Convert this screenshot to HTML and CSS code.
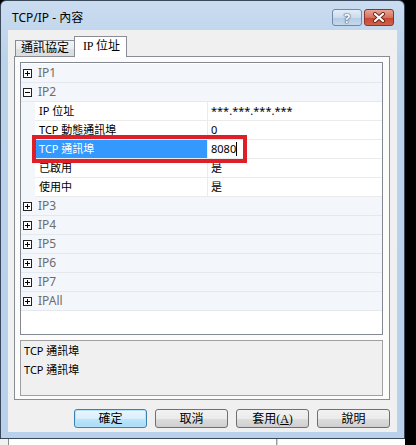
FILE: index.html
```html
<!DOCTYPE html>
<html lang="zh-Hant">
<head>
    <meta charset="UTF-8">
    <title>TCP/IP - 內容</title>
    <link rel="stylesheet" href="styles.css">
</head>
<body>
    <div class="screen">
        <div class="window">
            <div class="titlebar">
                <span class="title">TCP/IP - 內容</span>
                <div class="caption-buttons">
                    <span class="cap-btn help">?</span>
                    <span class="cap-btn close">
                        <svg width="14" height="11" viewBox="0 0 14 11">
                            <path d="M3 2 L11 9 M11 2 L3 9" stroke="#6b2218" stroke-width="4" stroke-linecap="round"/>
                            <path d="M3 2 L11 9 M11 2 L3 9" stroke="#fff" stroke-width="2.2" stroke-linecap="round"/>
                        </svg>
                    </span>
                </div>
            </div>

            <div class="client">
                <div class="tabs">
                    <div class="tab">通訊協定</div>
                    <div class="tab active">IP 位址</div>
                </div>

                <div class="tab-panel">
                    <div class="grid">
                        <div class="row cat"><svg class="toggle" width="9" height="9" viewBox="0 0 9 9"><rect x="0.5" y="0.5" width="8" height="8" fill="#fff" stroke="#222"/><path d="M2 4.5h5M4.5 2v5" stroke="#000"/></svg><span class="cat-name">IP1</span></div>
                        <div class="row cat"><svg class="toggle" width="9" height="9" viewBox="0 0 9 9"><rect x="0.5" y="0.5" width="8" height="8" fill="#fff" stroke="#222"/><path d="M2 4.5h5" stroke="#000"/></svg><span class="cat-name">IP2</span></div>
                        <div class="row prop"><span class="gutter"></span><span class="name">IP 位址</span><span class="value">***.***.***.***</span></div>
                        <div class="row prop"><span class="gutter"></span><span class="name">TCP 動態通訊埠</span><span class="value">0</span></div>
                        <div class="row prop selected"><span class="gutter"></span><span class="name">TCP 通訊埠</span><span class="value">8080<span class="caret"></span></span></div>
                        <div class="row prop"><span class="gutter"></span><span class="name">已啟用</span><span class="value">是</span></div>
                        <div class="row prop"><span class="gutter"></span><span class="name">使用中</span><span class="value">是</span></div>
                        <div class="row cat"><svg class="toggle" width="9" height="9" viewBox="0 0 9 9"><rect x="0.5" y="0.5" width="8" height="8" fill="#fff" stroke="#222"/><path d="M2 4.5h5M4.5 2v5" stroke="#000"/></svg><span class="cat-name">IP3</span></div>
                        <div class="row cat"><svg class="toggle" width="9" height="9" viewBox="0 0 9 9"><rect x="0.5" y="0.5" width="8" height="8" fill="#fff" stroke="#222"/><path d="M2 4.5h5M4.5 2v5" stroke="#000"/></svg><span class="cat-name">IP4</span></div>
                        <div class="row cat"><svg class="toggle" width="9" height="9" viewBox="0 0 9 9"><rect x="0.5" y="0.5" width="8" height="8" fill="#fff" stroke="#222"/><path d="M2 4.5h5M4.5 2v5" stroke="#000"/></svg><span class="cat-name">IP5</span></div>
                        <div class="row cat"><svg class="toggle" width="9" height="9" viewBox="0 0 9 9"><rect x="0.5" y="0.5" width="8" height="8" fill="#fff" stroke="#222"/><path d="M2 4.5h5M4.5 2v5" stroke="#000"/></svg><span class="cat-name">IP6</span></div>
                        <div class="row cat"><svg class="toggle" width="9" height="9" viewBox="0 0 9 9"><rect x="0.5" y="0.5" width="8" height="8" fill="#fff" stroke="#222"/><path d="M2 4.5h5M4.5 2v5" stroke="#000"/></svg><span class="cat-name">IP7</span></div>
                        <div class="row cat"><svg class="toggle" width="9" height="9" viewBox="0 0 9 9"><rect x="0.5" y="0.5" width="8" height="8" fill="#fff" stroke="#222"/><path d="M2 4.5h5M4.5 2v5" stroke="#000"/></svg><span class="cat-name">IPAll</span></div>

                        <!-- red marker drawn over the edited row -->
                        <div class="highlight"></div>
                    </div>

                    <div class="desc">
                        <div>TCP 通訊埠</div>
                        <div>TCP 通訊埠</div>
                    </div>
                </div>

                <div class="buttons">
                    <button class="btn default">確定</button>
                    <button class="btn">取消</button>
                    <button class="btn">套用(<u>A</u>)</button>
                    <button class="btn">說明</button>
                </div>
            </div>
        </div>

        <div class="under">
            <span class="under-a"></span>
            <span class="under-b"></span>
            <span class="under-c"></span>
        </div>
    </div>
</body>
</html>
```

FILE: styles.css
```css
* {
    box-sizing: border-box;
    margin: 0;
    padding: 0;
}

body {
    background: #000;
    font-family: 'Noto Sans', 'Noto Sans CJK TC', sans-serif;
    font-size: 11px;
    color: #000;
}

.screen {
    width: 416px;
    height: 445px;
    background: #000;
}

/* window frame */
.window {
    width: 405px;
    height: 439px;
    border: 1px solid #3a4a5c;
    border-radius: 6px 6px 0 0;
    background: linear-gradient(#cadcf0, #bad2ea 60px, #b9d1ea);
    padding: 0 7px 6px 7px;
    display: flex;
    flex-direction: column;
}

.titlebar {
    height: 29px;
    display: flex;
    justify-content: space-between;
    align-items: flex-start;
}

.title {
    font-size: 12px;
    line-height: 16px;
    padding: 9px 0 0 4px;
}

.caption-buttons {
    display: flex;
    gap: 2px;
    margin: 8px 3px 0 0;
}

.cap-btn {
    width: 30px;
    height: 17px;
    border-radius: 3px;
    display: flex;
    align-items: center;
    justify-content: center;
}

.help {
    border: 1px solid #6f8aa8;
    background: linear-gradient(#e3edf8, #cbdcee 50%, #b5cbe3 51%, #c4d8ee);
    color: #fff;
    font-weight: bold;
    font-size: 13px;
    text-shadow: 0 0 1px #3e5878, 0 0 1px #3e5878, 0 0 2px #3e5878;
}

.close {
    border: 1px solid #8b3325;
    background: linear-gradient(#e8a596, #d6715f 50%, #c5452f 51%, #d2624c);
}

/* client area */
.client {
    flex: 1;
    background: #f0f0f0;
    display: flex;
    flex-direction: column;
}

.tabs {
    height: 20px;
    margin-top: 6px;
    padding-left: 7px;
    display: flex;
    align-items: flex-end;
    font-family: 'Liberation Serif', 'Noto Sans CJK TC', serif;
    font-size: 12px;
}

.tab {
    width: 60px;
    height: 16px;
    border: 1px solid #898c95;
    border-bottom: none;
    background: linear-gradient(#f4f4f4, #ececec 50%, #e0e0e0 51%, #dcdcdc);
    text-align: center;
    line-height: 15px;
}

.tab.active {
    width: 53px;
    height: 21px;
    margin-left: -1px;
    margin-bottom: -1px;
    background: #fff;
    position: relative;
    line-height: 19px;
    padding-left: 2px;
}

.tab-panel {
    height: 344px;
    margin: 0 7px 0 6px;
    border: 1px solid #898c95;
    background: #fcfcfc;
    padding: 5px 6px 3px 5px;
}

/* property grid */
.grid {
    position: relative;
    height: 273px;
    border: 1px solid #828790;
    padding-top: 1px;
    background: #fff;
}

.row {
    height: 19px;
    line-height: 18px;
    white-space: nowrap;
}

.row.cat {
    display: flex;
    align-items: center;
    background: #f3f6fb;
    border-bottom: 1px solid #e4e9ef;
}

.toggle {
    margin-left: 2px;
    flex: none;
}

.cat-name {
    color: #6d6d6d;
    font-size: 12px;
    padding-left: 6px;
}

.row.prop {
    display: grid;
    grid-template-columns: 14px 173px 1fr;
}

.gutter {
    background: #f3f6fb;
}

.name {
    padding-left: 4px;
    border-right: 1px solid #ebebeb;
    border-bottom: 1px solid #ebebeb;
}

.value {
    padding-left: 3px;
    border-bottom: 1px solid #ebebeb;
}

.selected .name {
    background: #3399ff;
    color: #fff;
}

.caret {
    display: inline-block;
    width: 1px;
    height: 14px;
    background: #000;
    vertical-align: -3px;
}

.highlight {
    position: absolute;
    left: 11px;
    top: 72px;
    width: 215px;
    height: 28px;
    border: 4px solid #dd1f27;
}

/* description box */
.desc {
    height: 56px;
    margin-top: 5px;
    border: 1px solid #a0a0a0;
    background: #f0f0f0;
    padding-left: 3px;
    line-height: 19px;
}

/* dialog buttons */
.buttons {
    display: flex;
    justify-content: flex-end;
    gap: 8px;
    margin-top: 9px;
    padding-right: 7px;
}

.btn {
    width: 73px;
    height: 19px;
    border: 1px solid #707070;
    border-radius: 3px;
    background: linear-gradient(#f2f2f2, #ebebeb 50%, #dddddd 51%, #cfcfcf);
    font-family: 'Liberation Serif', 'Noto Sans CJK TC', serif;
    font-size: 12px;
    line-height: 16px;
    color: #000;
}

.btn.default {
    border-color: #3c7fb1;
    background: linear-gradient(#eaf6fd, #d9f0fc 50%, #bee6fd 51%, #a7d9f5);
    box-shadow: inset 0 0 0 1px #b6e3fc;
}

/* strip of the window underneath */
.under {
    width: 405px;
    height: 6px;
    display: flex;
}

.under-a {
    width: 9px;
    background: #f2f2f2;
    border-right: 1px solid #8a8a8a;
}

.under-b {
    width: 268px;
    background: #fff;
    border-right: 1px solid #9a9a9a;
}

.under-c {
    flex: 1;
    background: #fff;
    border-left: 1px solid #d0d0d0;
}
```
